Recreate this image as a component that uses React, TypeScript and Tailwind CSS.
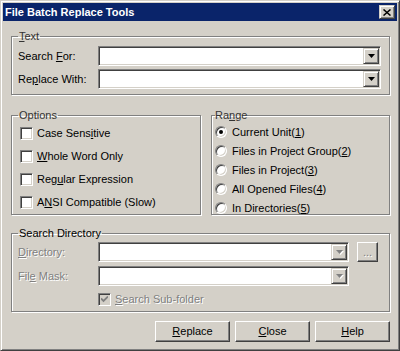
import React from "react";

const sunken =
  "border border-t-[#808080] border-l-[#808080] border-b-white border-r-white shadow-[inset_1px_1px_0_#404040,inset_-1px_-1px_0_#d4d0c8]";
const raised =
  "border border-t-white border-l-white border-b-[#404040] border-r-[#404040] shadow-[inset_-1px_-1px_0_#808080] bg-[#d4d0c8]";
const raisedSmall =
  "border border-t-[#d4d0c8] border-l-[#d4d0c8] border-b-[#404040] border-r-[#404040] shadow-[inset_1px_1px_0_#fff,inset_-1px_-1px_0_#808080] bg-[#d4d0c8]";
const group =
  "border border-[#808080] shadow-[inset_1px_1px_0_#fff,1px_1px_0_#fff] min-w-0";
const disabledText = "text-[#808080] [text-shadow:1px_1px_0_#fff]";

function Combo({ disabled = false, className = "" }: { disabled?: boolean; className?: string }) {
  return (
    <div className={`h-[20px] bg-white ${sunken} flex justify-end p-px ${className}`}>
      <div className={`w-[16px] h-[16px] ${raisedSmall} flex items-center justify-center`}>
        <svg width="7" height="4" viewBox="0 0 7 4" className={disabled ? "drop-shadow-[1px_1px_0_#fff]" : ""}>
          <path d="M0 0h7L3.5 4z" fill={disabled ? "#808080" : "#000"} />
        </svg>
      </div>
    </div>
  );
}

function CheckBox({ label, checked = false, disabled = false }: { label: React.ReactNode; checked?: boolean; disabled?: boolean }) {
  return (
    <div className="flex items-center h-[13px]">
      <div className={`w-[13px] h-[13px] ${sunken} ${disabled ? "bg-[#d4d0c8]" : "bg-white"} flex items-center justify-center`}>
        {checked && (
          <svg width="7" height="7" viewBox="0 0 7 7">
            <path d="M0 2.5l2.5 2.5L7 0.5" stroke={disabled ? "#808080" : "#000"} strokeWidth="1.8" fill="none" />
          </svg>
        )}
      </div>
      <span className={`ml-[4px] leading-[13px] ${disabled ? disabledText : ""}`}>{label}</span>
    </div>
  );
}

function Radio({ label, checked = false }: { label: React.ReactNode; checked?: boolean }) {
  return (
    <div className="flex items-center h-[12px]">
      <div className="w-[12px] h-[12px] rounded-full bg-white border border-t-[#808080] border-l-[#808080] border-b-white border-r-white shadow-[inset_1px_1px_0_#404040,inset_-1px_-1px_0_#d4d0c8] flex items-center justify-center">
        {checked && <div className="w-[4px] h-[4px] rounded-full bg-black" />}
      </div>
      <span className="ml-[5px] leading-[13px]">{label}</span>
    </div>
  );
}

function Button({ children }: { children: React.ReactNode }) {
  return <div className={`w-[75px] h-[21px] ${raised} flex items-center justify-center`}>{children}</div>;
}

export default function App() {
  return (
    <div className="w-[400px] h-[351px] bg-[#d4d0c8] border border-t-[#d4d0c8] border-l-[#d4d0c8] border-b-[#404040] border-r-[#404040] shadow-[inset_1px_1px_0_#fff,inset_-1px_-1px_0_#808080] p-[2px] font-['Liberation_Sans',Arial,sans-serif] text-[11px] text-black flex flex-col">
      <div className="h-[18px] bg-[#0a246a] flex items-center justify-between pl-[2px] pr-[2px] shrink-0">
        <span className="text-white font-bold text-[11px]">File Batch Replace Tools</span>
        <div className={`w-[16px] h-[14px] ${raisedSmall} flex items-center justify-center`}>
          <svg width="8" height="7" viewBox="0 0 8 7">
            <path d="M0.5 0.5L7.5 6.5M7.5 0.5L0.5 6.5" stroke="#000" strokeWidth="1.5" />
          </svg>
        </div>
      </div>

      <div className="pl-[8px] pr-[7px] flex flex-col">
        <fieldset className={`${group} mt-[9px] pl-[6px] pr-[8px] pb-[5px]`}>
          <legend className="px-px leading-[13px] text-[#333]">
            <u>T</u>ext
          </legend>
          <div className="flex items-center mt-[3px]">
            <span className="w-[80px]">
              Search <u>F</u>or:
            </span>
            <Combo className="flex-1" />
          </div>
          <div className="flex items-center mt-[3px]">
            <span className="w-[80px]">
              Re<u>p</u>lace With:
            </span>
            <Combo className="flex-1" />
          </div>
        </fieldset>

        <div className="flex gap-[10px] mt-[14px]">
          <fieldset className={`${group} w-[190px] h-[106px] pl-[6px]`}>
            <legend className="px-px leading-[13px] text-[#333]">Options</legend>
            <div className="flex flex-col gap-[10px] pl-[2px] mt-[5px]">
              <CheckBox label={<>Case Sens<u>i</u>tive</>} />
              <CheckBox label={<><u>W</u>hole Word Only</>} />
              <CheckBox label={<>Reg<u>u</u>lar Expression</>} />
              <CheckBox label={<>A<u>N</u>SI Compatible (Slow)</>} />
            </div>
          </fieldset>
          <fieldset className={`${group} flex-1 h-[106px] pl-[3px]`}>
            <legend className="leading-[13px] text-[#333]">
              Ra<u>n</u>ge
            </legend>
            <div className="flex flex-col gap-[7px] mt-[4px]">
              <Radio checked label={<>Current Unit(<u>1</u>)</>} />
              <Radio label={<>Files in Project Group(<u>2</u>)</>} />
              <Radio label={<>Files in Project(<u>3</u>)</>} />
              <Radio label={<>All Opened Files(<u>4</u>)</>} />
              <Radio label={<>In Directories(<u>5</u>)</>} />
            </div>
          </fieldset>
        </div>

        <fieldset className={`${group} mt-[12px] pl-[6px] pb-[5px]`}>
          <legend className="px-px leading-[13px]">Search Directory</legend>
          <div className="flex items-center mt-[2px]">
            <span className={`w-[80px] ${disabledText}`}>
              <u>D</u>irectory:
            </span>
            <Combo disabled className="w-[251px]" />
            <div className={`ml-[8px] w-[21px] h-[20px] ${raised} flex items-center justify-center ${disabledText}`}>
              ...
            </div>
          </div>
          <div className="flex items-center mt-[4px]">
            <span className={`w-[80px] ${disabledText}`}>
              Fil<u>e</u> Mask:
            </span>
            <Combo disabled className="w-[251px]" />
          </div>
          <div className="pl-[80px] mt-[7px]">
            <CheckBox checked disabled label={<><u>S</u>earch Sub-folder</>} />
          </div>
        </fieldset>

        <div className="flex justify-end gap-[5px] mt-[9px]">
          <Button>
            <u>R</u>eplace
          </Button>
          <Button>
            <u>C</u>lose
          </Button>
          <Button>
            <u>H</u>elp
          </Button>
        </div>
      </div>
    </div>
  );
}
